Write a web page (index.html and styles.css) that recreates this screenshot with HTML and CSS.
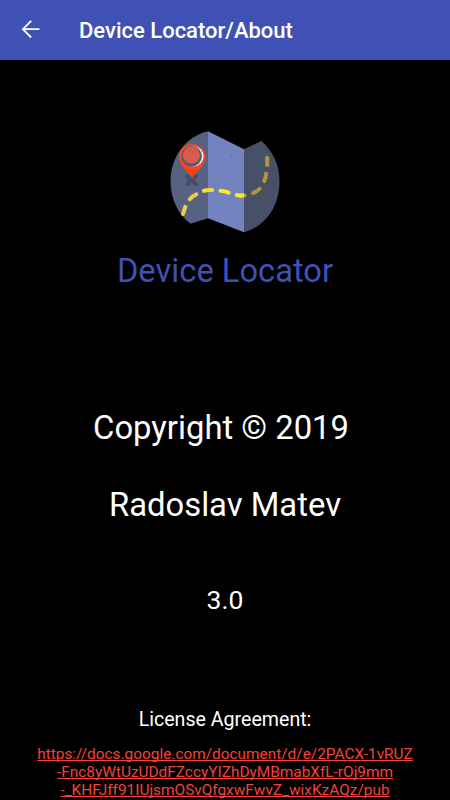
FILE: index.html
```html
<!DOCTYPE html>
<html lang="en">
<head>
  <meta charset="UTF-8" />
  <title>Device Locator/About</title>
  <meta name="viewport" content="width=device-width, initial-scale=1" />
  <link rel="stylesheet" href="styles.css">
</head>
<body>
  <header class="toolbar">
    <svg class="back" viewBox="0 0 20 20" width="20" height="20">
      <path d="M18.5 9.2H2M10.2 .9L1.9 9.2l8.3 8.3" />
    </svg>
    <h1>Device Locator/About</h1>
  </header>

  <main class="about">
    <svg class="logo" viewBox="0 0 130 120" width="130" height="120">
      <path fill="#576181" d="M48 11.3V98.2L30.5 103.8C19 95 10.5 80 10.5 61C10.5 36 27 16 48 11.3Z" />
      <path fill="#7383bf" d="M48 11.3L84 29.3V112.3L48 98.2Z" />
      <path fill="#465066" d="M84 29.3L101.3 21C112 30 119.5 44 119.5 61C119.5 86 106 106 84 112.3Z" />
      <path class="cross" d="M27.2 56L35.8 64M35.8 56L27.2 64" />
      <path class="dash" stroke="#f0cd48" d="M23 94L25.3 86.8M29.8 79.2Q32.5 76 36.3 74.3" />
      <path class="dash" stroke="#f7d93a" d="M43.9 70.8Q48 69.8 52 70.1" />
      <path class="dash" stroke="#fdec1e" d="M60.5 70.8Q65 71.2 68.7 72.6" />
      <path class="dash" stroke="#b5943c" d="M80 75.5H84.8M93.2 73Q96.8 71.5 99.5 68.8M104.3 61Q105.8 57.5 106 53.8M107.2 45V37.8" />
      <path class="dash" stroke="#fdec1e" d="M76.8 75L80 75.4" />
      <path class="dash flat" stroke="#fdec1e" d="M80 75.4L84 75.5" />
      <path fill="#ff4317" d="M32 24C24.6 24 19 29.6 19 36.7C19 44.5 25.5 49 32 58C38.5 49 45.5 44.5 45.5 36.7C45.5 29.6 39.4 24 32 24Z" />
      <circle cx="33.4" cy="36.4" r="10.2" fill="#e4f4f8" />
      <circle cx="31.7" cy="36.2" r="10.2" fill="#505b7c" />
      <circle cx="31.4" cy="35.3" r="8.5" fill="#d95b4b" />
      <circle cx="71.2" cy="36.3" r=".7" fill="#4c5bc5" />
    </svg>
    <h2 class="app-name">Device Locator</h2>
    <p class="copyright">Copyright © 2019</p>
    <p class="author">Radoslav Matev</p>
    <p class="version">3.0</p>
    <p class="license">License Agreement:</p>
    <a class="link" href="#">https://docs.google.com/document/d/e/2PACX-1vRUZ<br>-Fnc8yWtUzUDdFZccyYIZhDyMBmabXfL-rOj9mm<br>-_KHFJff91IUjsmOSvQfgxwFwvZ_wixKzAQz/pub</a>
  </main>
</body>
</html>
```

FILE: styles.css
```css
html, body {
  margin: 0;
  padding: 0;
  height: 100%;
  overflow: hidden;
}
body {
  background: #000;
  color: #fff;
  font-family: Roboto, sans-serif;
}
h1, h2, p {
  margin: 0;
  font-weight: 400;
  white-space: nowrap;
}
.toolbar {
  display: flex;
  align-items: center;
  height: 60px;
  box-sizing: border-box;
  padding-left: 21px;
  background: #3f51b5;
}
.toolbar h1 {
  margin-left: 38px;
  padding-top: 1px;
  font-size: 22px;
  line-height: 30px;
  font-weight: 500;
}
.back {
  fill: none;
  stroke: #fff;
  stroke-width: 1.8;
}
.about {
  display: flex;
  flex-direction: column;
  align-items: center;
  padding-top: 60px;
}
.logo {
  display: block;
}
.cross {
  fill: none;
  stroke: #444d66;
  stroke-width: 4;
  stroke-linecap: round;
}
.dash {
  fill: none;
  stroke-width: 4;
  stroke-linecap: round;
}
.flat {
  stroke-linecap: butt;
}
.app-name {
  margin-top: 11px;
  font-size: 32.7px;
  line-height: 40px;
  color: #3f51b5;
}
.copyright {
  margin-top: 117px;
  padding-right: 8px;
  font-size: 32.8px;
  line-height: 40px;
}
.author {
  margin-top: 37px;
  font-size: 32.8px;
  line-height: 40px;
}
.version {
  margin-top: 59px;
  font-size: 26.5px;
  line-height: 32px;
}
.license {
  margin-top: 92px;
  font-size: 19.6px;
  line-height: 24px;
}
.link {
  margin-top: 13px;
  font-size: 15.4px;
  line-height: 18px;
  text-align: center;
  white-space: nowrap;
  color: #f44336;
  text-decoration: underline;
  text-decoration-skip-ink: none;
}
```
